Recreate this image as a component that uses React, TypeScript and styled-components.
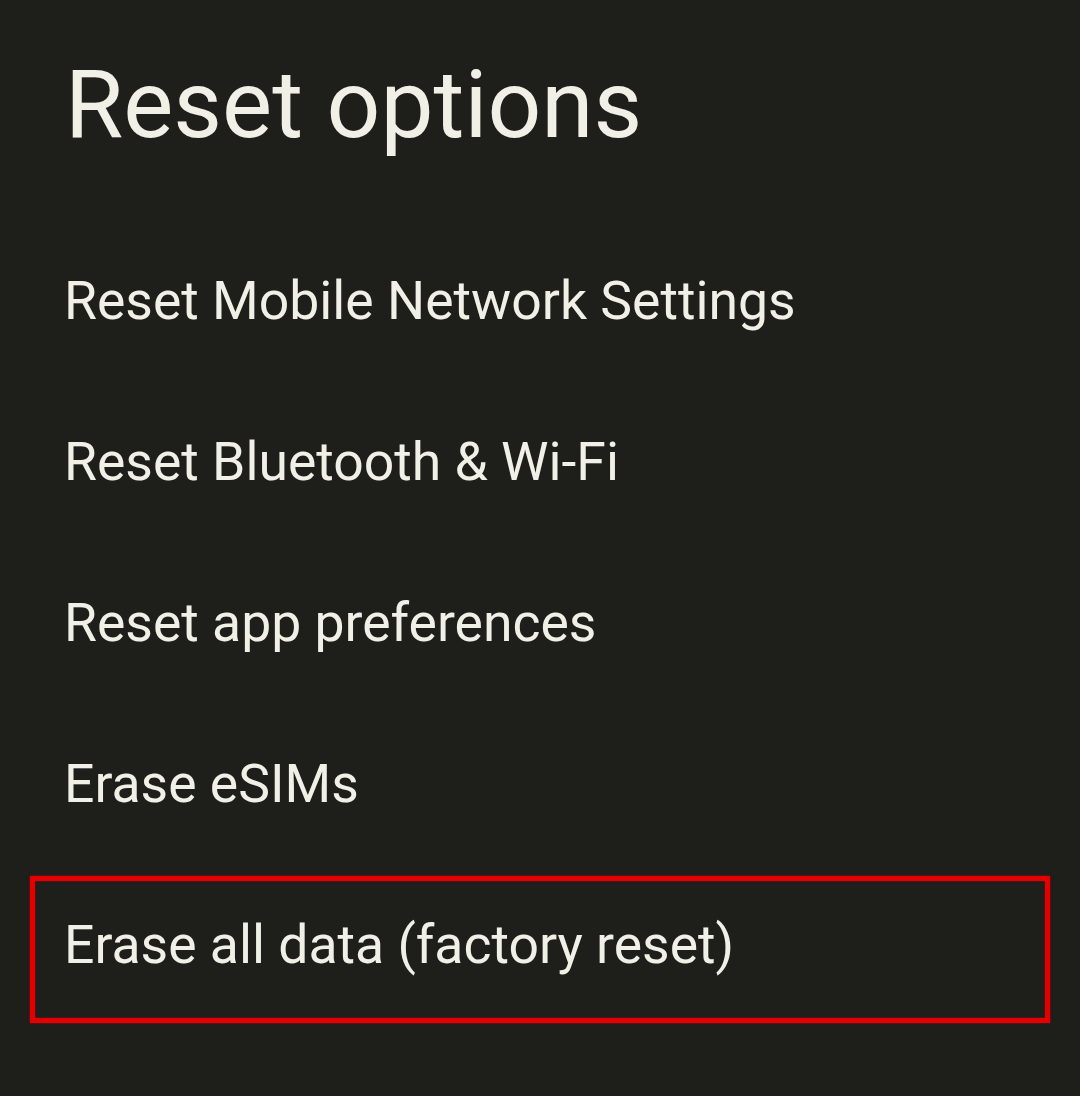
import React from "react";
import styled, { createGlobalStyle } from "styled-components";

const GlobalStyle = createGlobalStyle`
  html, body { margin: 0; padding: 0; background: #1e1e1b; }
  #root { min-height: 1096px; }
`;

const Page = styled.main`
  width: 1080px;
  min-height: 1096px;
  background: #1e1e1b;
  color: #f0f0e7;
  font-family: Roboto, "Noto Sans", Arial, sans-serif;
  display: flex;
  flex-direction: column;
`;

const Title = styled.h1`
  margin: 0 0 68px;
  padding: 57px 0 0 65px;
  font-size: 94.5px;
  line-height: 95px;
  font-weight: 400;
  letter-spacing: 0;
`;

const List = styled.ul`
  list-style: none;
  margin: 0;
  padding: 0;
  display: flex;
  flex-direction: column;
`;

const Row = styled.li`
  position: relative;
  height: 161px;
  padding-left: 64px;
  font-size: 53.5px;
  line-height: 161px;
  font-weight: 400;
  white-space: nowrap;
`;

const Highlight = styled.span`
  position: absolute;
  left: 30px;
  right: 30px;
  top: 12px;
  bottom: 2px;
  border: 5px solid #e40000;
  box-shadow: 0 0 2px rgba(228, 0, 0, 0.7), inset 0 0 2px rgba(228, 0, 0, 0.7);
  pointer-events: none;
`;

const items = [
  "Reset Mobile Network Settings",
  "Reset Bluetooth & Wi-Fi",
  "Reset app preferences",
  "Erase eSIMs",
  "Erase all data (factory reset)",
];

export default function App() {
  return (
    <>
      <GlobalStyle />
      <Page>
        <Title>Reset options</Title>
        <List>
          {items.map((label, i) => (
            <Row key={label}>
              {label}
              {i === items.length - 1 && <Highlight />}
            </Row>
          ))}
        </List>
      </Page>
    </>
  );
}
